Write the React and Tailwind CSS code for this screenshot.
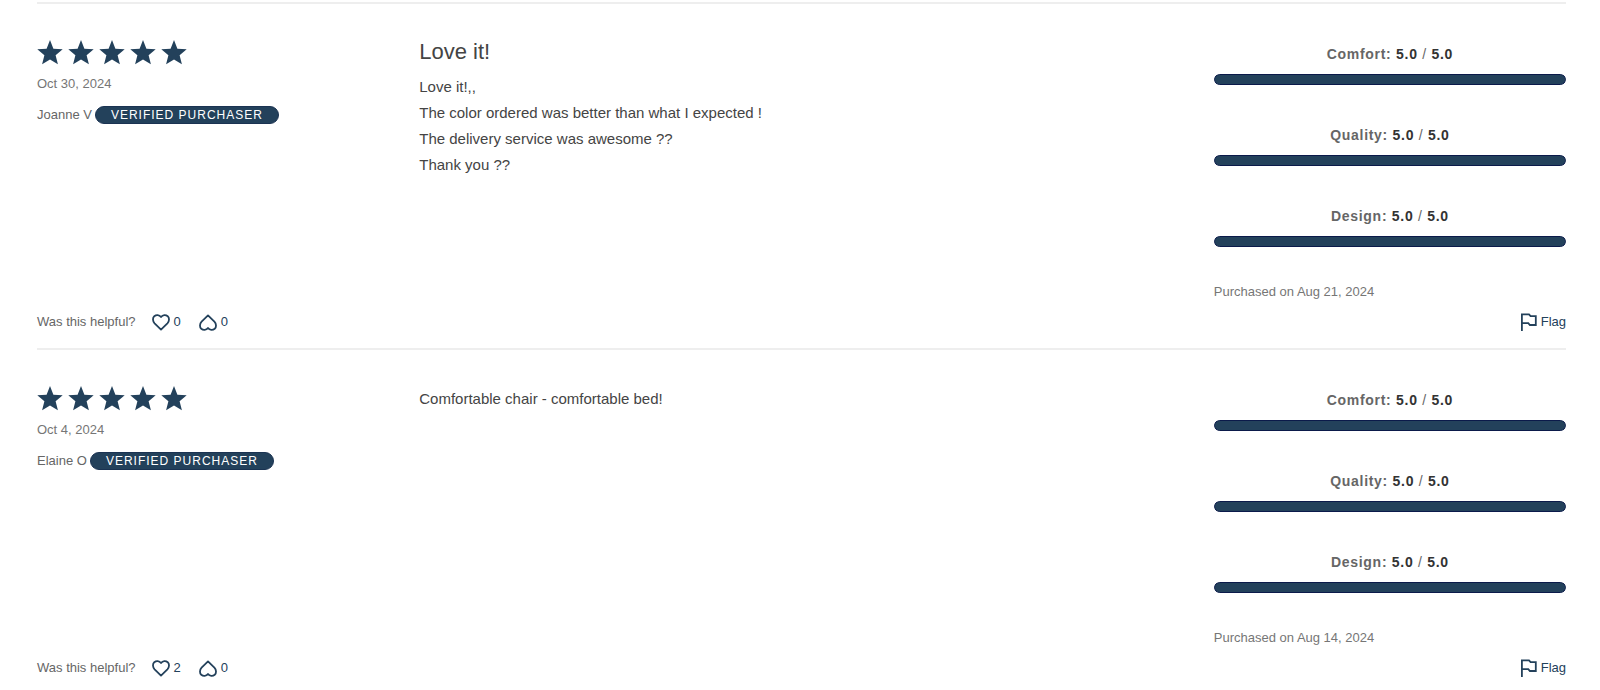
const reviews = [
  {
    id: 1,
    date: "Oct 30, 2024",
    author: "Joanne V",
    title: "Love it!",
    lines: [
      "Love it!,,",
      "The color ordered was better than what I expected !",
      "The delivery service was awesome ??",
      "Thank you ??",
    ],
    purchased: "Aug 21, 2024",
    up: 0,
    down: 0,
  },
  {
    id: 2,
    date: "Oct 4, 2024",
    author: "Elaine O",
    lines: ["Comfortable chair - comfortable bed!"],
    purchased: "Aug 14, 2024",
    up: 2,
    down: 0,
  },
];

const ratings = [
  { label: "Comfort", value: 5 },
  { label: "Quality", value: 5 },
  { label: "Design", value: 5 },
];

function Stars() {
  return (
    <div className="flex gap-[5px]" role="img" aria-label="5 out of 5 stars">
      {[1, 2, 3, 4, 5].map((n) => (
        <svg key={n} viewBox="0 0 26 25" className="h-[25px] w-[26px]" fill="#23415b">
          <path d="M13 0 L16.4 8.7 L25.7 9.3 L18.6 15.2 L20.9 24.3 L13 19.4 L5.1 24.3 L7.4 15.2 L0.3 9.3 L9.6 8.7 Z" />
        </svg>
      ))}
    </div>
  );
}

function Heart({ flipped }) {
  return (
    <svg
      viewBox="0 0 18 17"
      className={flipped ? "h-[17px] w-[18px] rotate-180" : "h-[17px] w-[18px]"}
      fill="none"
      stroke="#23415b"
      strokeWidth="1.8"
      strokeLinejoin="round"
    >
      <path d="M9 15.6 L2.6 9.3 C0.5 7.1 0.5 3.9 2.3 2.2 C4.2 0.6 7.2 0.6 9 3 C10.8 0.6 13.8 0.6 15.7 2.2 C17.5 3.9 17.5 7.1 15.4 9.3 Z" />
    </svg>
  );
}

function FlagIcon() {
  return (
    <svg viewBox="0 0 17 18" className="h-[18px] w-[17px]" fill="none" stroke="#23415b" strokeWidth="1.8">
      <path d="M1.9 18 V1.4 H9 L10.6 3.2 H15.8 V12 H9.9 L8.3 10.2 H1.9" />
    </svg>
  );
}

function Rating({ label, value }) {
  return (
    <div className="flex flex-col gap-[10px]">
      <div className="text-center text-sm leading-5 tracking-wider text-[#666]">
        <b>{label}:</b> <b className="text-[#333]">{value.toFixed(1)}</b>
        {" / "}
        <b className="text-[#333]">5.0</b>
      </div>
      <div className="h-[11px] overflow-hidden rounded-full bg-gray-200">
        <div
          className="h-full rounded-full border border-[#0b1a4a] bg-[#23415b]"
          style={{ width: `${(value / 5) * 100}%` }}
        />
      </div>
    </div>
  );
}

function Review({ review }) {
  return (
    <article className="border-t-2 border-[#eee] pt-9 pb-4">
      <div className="grid grid-cols-4">
        <div>
          <Stars />
          <p className="mt-[9px] text-[13px] leading-5 text-[#767676]">{review.date}</p>
          <div className="mt-[11px] flex items-center gap-[3px] text-[13px] leading-5 text-[#666]">
            <span>{review.author}</span>
            <span className="rounded-full border border-[#1b3352] bg-[#23415b] px-[15px] text-xs leading-4 tracking-[1px] text-white">
              VERIFIED PURCHASER
            </span>
          </div>
        </div>
        <div className="col-span-2">
          {review.title && (
            <h3 className="mb-[10px] text-[22px] leading-6 text-[#444]">{review.title}</h3>
          )}
          <div className="text-[15px] leading-[26px] text-[#444]">
            {review.lines.map((line) => (
              <p key={line}>{line}</p>
            ))}
          </div>
        </div>
        <div className="pt-1 pl-[30px]">
          <div className="flex flex-col gap-10">
            {ratings.map((r) => (
              <Rating key={r.label} label={r.label} value={r.value} />
            ))}
          </div>
          <p className="mt-[35px] text-[13px] leading-5 text-[#767676]">Purchased on {review.purchased}</p>
        </div>
      </div>
      <div className="mt-[10px] flex items-center text-[13px] leading-5 text-[#666]">
        <span>Was this helpful?</span>
        <button aria-label="Helpful" className="ml-4 flex items-center gap-1 text-[#23415b]">
          <Heart />
          {review.up}
        </button>
        <button aria-label="Not helpful" className="ml-[18px] flex items-center gap-1 text-[#23415b]">
          <Heart flipped />
          {review.down}
        </button>
        <button className="ml-auto flex items-center gap-1 text-[#23415b]">
          <FlagIcon />
          Flag
        </button>
      </div>
    </article>
  );
}

export default function App() {
  return (
    <main className="bg-white pt-[2px] pr-[34px] pl-[37px] font-['Liberation_Sans',Arial,sans-serif]">
      {reviews.map((review) => (
        <Review key={review.id} review={review} />
      ))}
    </main>
  );
}
